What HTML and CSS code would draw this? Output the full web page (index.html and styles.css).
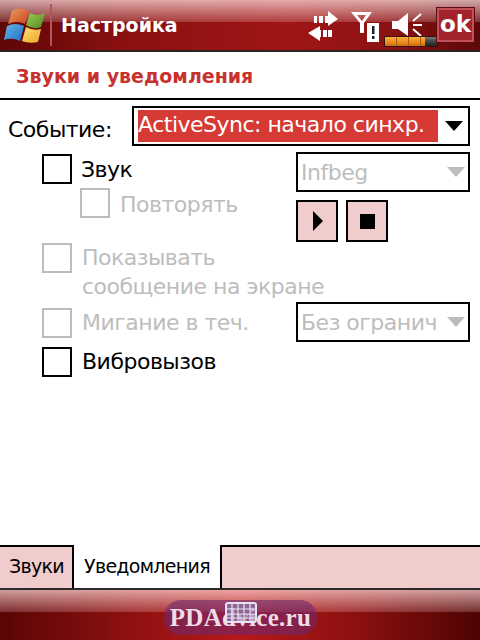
FILE: index.html
```html
<!DOCTYPE html>
<html lang="ru">
<head>
  <meta charset="UTF-8">
  <title>Настройка</title>
  <link rel="stylesheet" href="styles.css">
</head>
<body>
  <header class="topbar">
    <svg class="winlogo" width="46" height="46" viewBox="0 0 46 46">
      <defs>
        <linearGradient id="flagRed" x1="0" y1="0" x2="1" y2="1"><stop offset="0" stop-color="#f0a060"/><stop offset="1" stop-color="#c8401c"/></linearGradient>
        <linearGradient id="flagGreen" x1="0" y1="0" x2="1" y2="1"><stop offset="0" stop-color="#a4c850"/><stop offset="1" stop-color="#4e8e22"/></linearGradient>
        <linearGradient id="flagBlue" x1="0" y1="0" x2="1" y2="1"><stop offset="0" stop-color="#68b8ec"/><stop offset="1" stop-color="#1c6cc0"/></linearGradient>
        <linearGradient id="flagYellow" x1="0" y1="0" x2="1" y2="1"><stop offset="0" stop-color="#fce080"/><stop offset="1" stop-color="#eea820"/></linearGradient>
      </defs>
      <path d="M11 9 Q19 4 28 9 L24 22 Q16 18 7 22 Z" fill="url(#flagRed)"/>
      <path d="M29 11 Q36 15 44 11 L40 25 Q32 28 25 23 Z" fill="url(#flagGreen)"/>
      <path d="M6 24 Q14 20 23 24 L19 39 Q11 35 3 38 Z" fill="url(#flagBlue)"/>
      <path d="M25 25 Q32 29 40 27 L37 40 Q28 42 21 39 Z" fill="url(#flagYellow)"/>
    </svg>
    <span class="divider"></span>
    <h1 class="apptitle">Настройка</h1>
    <div class="status">
      <svg width="32" height="32" viewBox="0 0 32 32">
        <path d="M6 6 H9 V13 H6 Z M11 6 H15 V13 H11 Z M17 6 H20 V1 L30 9 L20 16 V13 H17 Z" fill="#fff"/>
        <path d="M0 23 L12 16 V20 H13 V27 H12 V31 Z M15 20 H19 V27 H15 Z M20 20 H24 V27 H20 Z" fill="#fff"/>
      </svg>
      <svg class="signal" width="30" height="32" viewBox="0 0 30 32">
        <path d="M1 1 H22 L14 12 V22 H10 V12 Z M7 4 L12 10 L16 4 Z" fill="#fff" fill-rule="evenodd"/>
        <rect x="17" y="12" width="12" height="19" fill="#fff"/>
        <path d="M22 15 H24.500 V23 H22 Z M22 25 H24.500 V28 H22 Z" fill="#222"/>
      </svg>
      <svg class="speaker" width="32" height="26" viewBox="0 0 32 26">
        <path d="M1 9 H7 L17 1 V24 L7 17 H1 Z" fill="#fff"/>
        <path d="M22 9 L30 2 M22 13 H31 M22 17 L30 24" stroke="#fff" stroke-width="2" fill="none"/>
      </svg>
    </div>
    <span class="battery"><span class="charge"></span></span>
    <span class="okbtn">ok</span>
  </header>

  <div class="subtitle">Звуки и уведомления</div>

  <main class="content">
    <div class="event-row">
      <label class="event-label">Событие:</label>
      <div class="combo combo-event">
        <span class="selected">ActiveSync: начало синхр.</span>
        <span class="arrow"></span>
      </div>
    </div>

    <div class="options">
      <div class="checks">
        <div class="check check-sound"><span class="box"></span><span class="text">Звук</span></div>
        <div class="check check-repeat off"><span class="box"></span><span class="text">Повторять</span></div>
        <div class="check check-show off"><span class="box"></span><span class="text">Показывать<br>сообщение на экране</span></div>
        <div class="check check-blink off"><span class="box"></span><span class="text">Мигание в теч.</span></div>
        <div class="check check-vibro"><span class="box"></span><span class="text">Вибровызов</span></div>
      </div>
      <div class="side">
        <div class="combo combo-small off"><span class="value">Infbeg</span><span class="arrow"></span></div>
        <div class="player">
          <button class="playbtn"><span class="play"></span></button>
          <button class="playbtn"><span class="stop"></span></button>
        </div>
        <div class="combo combo-small combo-limit off"><span class="value">Без огранич</span><span class="arrow"></span></div>
      </div>
    </div>
  </main>

  <nav class="tabs">
    <div class="tab">Звуки</div>
    <div class="tab active">Уведомления</div>
    <div class="tab-rest"></div>
  </nav>

  <footer class="bottombar">
    <div class="watermark">PDAdvice.ru</div>
    <svg class="keyboard" width="32" height="21" viewBox="0 0 32 21">
      <rect x="1" y="1" width="30" height="19" rx="2" fill="#8f84b8" fill-opacity="0.6" stroke="#e8e2f4" stroke-width="2"/>
      <path d="M1 7 H31 M1 12 H31 M1 16 H31 M7 1 V20 M13 1 V20 M19 1 V20 M25 1 V20" stroke="#e8e2f4" stroke-width="1.200"/>
    </svg>
  </footer>
</body>
</html>
```
FILE: styles.css
```css
* {
  box-sizing: border-box;
}
html, body {
  height: 100%;
}
body {
  margin: 0;
  width: 480px;
  height: 640px;
  overflow: hidden;
  display: flex;
  flex-direction: column;
  background: #fff;
  color: #000;
  font-family: "DejaVu Sans", sans-serif;
  font-size: 22px;
  letter-spacing: -0.5px;
}

/* top bar */
.topbar {
  position: relative;
  flex: none;
  height: 52px;
  display: flex;
  align-items: center;
  border-bottom: 2px solid #2b2222;
  background:
    linear-gradient(to bottom, rgba(255, 228, 228, 0.72) 0, rgba(255, 220, 220, 0.2) 22px, transparent 22px),
    linear-gradient(to right, #5e0606 0, #8a1010 25%, #a01616 60%, #8c1212 80%, #5e0808 100%);
}
.winlogo {
  flex: none;
  margin: 0 0 0 1px;
}
.divider {
  flex: none;
  width: 2px;
  height: 42px;
  margin-left: 3px;
  background: #b5545c;
}
.apptitle {
  margin: 0 0 0 9px;
  color: #fff;
  font-size: 19px;
  font-weight: bold;
  letter-spacing: 0;
}
.status {
  position: absolute;
  left: 308px;
  top: 10px;
  display: flex;
  align-items: flex-start;
}
.signal {
  margin: 1px 0 0 10px;
}
.speaker {
  margin: 2px 0 0 11px;
}
.battery {
  position: absolute;
  left: 384px;
  top: 36px;
  width: 54px;
  height: 11px;
  background: linear-gradient(to bottom, #777, #444 50%, #222);
  border: 1px solid #3a1010;
}
.charge {
  display: block;
  width: 40px;
  height: 100%;
  background:
    repeating-linear-gradient(to right, transparent 0 11px, #a85a10 11px 12px),
    linear-gradient(to bottom, #f7ae3c, #ec8a1a 60%, #c86c10);
}
.okbtn {
  position: absolute;
  left: 437px;
  top: 8px;
  width: 37px;
  height: 34px;
  display: flex;
  align-items: center;
  justify-content: center;
  padding-bottom: 3px;
  background: #a1242c;
  border: 2px solid #c25058;
  outline: 1px solid #5c0a0e;
  color: #fff;
  font-size: 23px;
  font-weight: bold;
  letter-spacing: 0;
}

/* heading */
.subtitle {
  flex: none;
  height: 48px;
  padding: 13px 0 0 16px;
  border-bottom: 2px solid #000;
  color: #c8322e;
  font-size: 19px;
  font-weight: bold;
  letter-spacing: 0;
}

/* form */
.content {
  flex: 1;
  padding: 6px 10px 0 8px;
}
.event-row {
  display: flex;
  align-items: center;
  justify-content: space-between;
}
.event-label {
  margin-top: 7px;
}
.combo {
  display: flex;
  align-items: center;
  height: 40px;
  border: 2px solid #000;
  background: #fff;
}
.combo-event {
  width: 338px;
  padding: 0 5px 0 4px;
  justify-content: space-between;
}
.selected {
  width: 300px;
  height: 32px;
  line-height: 30px;
  background: #d63a34;
  color: #fff;
  white-space: nowrap;
}
.arrow {
  flex: none;
  width: 0;
  height: 0;
  border-left: 9px solid transparent;
  border-right: 9px solid transparent;
  border-top: 10px solid #000;
}
.off {
  color: #bdbdbd;
}
.off .arrow {
  border-top-color: #bdbdbd;
}
.options {
  display: flex;
}
.checks {
  flex: none;
  width: 288px;
  padding-left: 34px;
}
.check {
  display: flex;
  align-items: flex-start;
  line-height: 29px;
  white-space: nowrap;
}
.box {
  flex: none;
  width: 30px;
  height: 30px;
  margin-right: 10px;
  border: 2px solid currentColor;
}
.check-sound {
  margin-top: 8px;
}
.check-sound .text {
  margin-left: -1px;
  padding-top: 1px;
}
.check-repeat {
  margin: 4px 0 0 38px;
}
.check-repeat .text {
  padding-top: 2px;
}
.check-show {
  margin-top: 24px;
}
.check-blink {
  margin-top: 7px;
}
.check-vibro {
  margin-top: 9px;
}
.side {
  flex: none;
  width: 174px;
  padding-top: 6px;
}
.combo-small {
  padding: 0 3px 0 3px;
  justify-content: space-between;
}
.value {
  white-space: nowrap;
}
.player {
  display: flex;
  gap: 8px;
  margin-top: 8px;
}
.playbtn {
  width: 42px;
  height: 42px;
  padding: 0;
  display: flex;
  align-items: center;
  justify-content: center;
  background: #f0cccc;
  border: 2px solid #000;
  border-radius: 0;
}
.play {
  width: 0;
  height: 0;
  margin-left: 2px;
  border-top: 10px solid transparent;
  border-bottom: 10px solid transparent;
  border-left: 10px solid #000;
}
.stop {
  width: 15px;
  height: 15px;
  background: #000;
}
.combo-limit {
  margin-top: 60px;
}

/* tabs */
.tabs {
  flex: none;
  height: 45px;
  display: flex;
  border-bottom: 2px solid #2b2b2b;
  font-size: 19px;
  letter-spacing: -0.7px;
}
.tab {
  width: 74px;
  padding: 8px 0 0 9px;
  border-top: 2px solid #000;
  border-right: 2px solid #000;
  background: #f0cccc;
}
.tab.active {
  width: 146px;
  padding-left: 10px;
  border-top: 0;
  border-right: 0;
  padding-top: 10px;
  background: #fff;
}
.tab-rest {
  flex: 1;
  border-top: 2px solid #000;
  border-left: 2px solid #000;
  background: #f0cccc;
}

/* bottom bar */
.bottombar {
  position: relative;
  flex: none;
  height: 50px;
  background:
    linear-gradient(to bottom, rgba(255, 215, 215, 0.72) 0, rgba(255, 220, 220, 0.2) 22px, transparent 22px),
    linear-gradient(to right, #5a0505 0, #8a1010 25%, #b81818 50%, #8a1010 75%, #4e0404 100%);
}
.watermark {
  position: absolute;
  left: 164px;
  top: 10px;
  width: 153px;
  height: 35px;
  border-radius: 17px;
  background: rgba(110, 40, 110, 0.6);
  color: #f0dce4;
  font-family: "Liberation Serif", serif;
  font-size: 25px;
  font-weight: bold;
  letter-spacing: 0.3px;
  line-height: 36px;
  text-align: center;
}
.keyboard {
  position: absolute;
  left: 225px;
  top: 12px;
}
```
